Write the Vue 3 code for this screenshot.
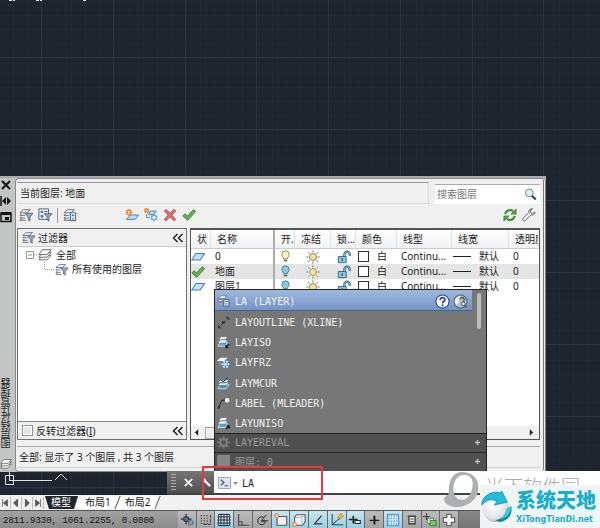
<script setup>
import { ref } from 'vue'

const command = ref('LA')
const search = ref('')
const inverted = ref(false)

const majors = [41, 113, 185, 256, 328, 400, 472, 543, 615, 687, 758, 830]
const majorRows = [57, 129, 200, 272, 344, 416, 487]
const minorOffsets = [-56, -42, -28, -14]
const steps = (list) => list.flatMap((v) => minorOffsets.map((o) => v + o))
const minors = steps(majors)
const minorRows = steps(majorRows)

const columns = ['状', '名称', '开.', '冻结', '锁...', '颜色', '线型', '线宽', '透明度']
const layers = [
  { name: '0', state: 'sheet', bulb: 'bulb-on' },
  { name: '地面', state: 'check', bulb: 'bulb-off', current: true },
  { name: '图层1', state: 'sheet', bulb: 'bulb-off' }
]

const suggestions = [
  { text: 'LA (LAYER)', icon: 'c-layer' },
  { text: 'LAYOUTLINE (XLINE)', icon: 'c-xline' },
  { text: 'LAYISO', icon: 'c-iso' },
  { text: 'LAYFRZ', icon: 'c-frz' },
  { text: 'LAYMCUR', icon: 'c-cur' },
  { text: 'LABEL (MLEADER)', icon: 'c-label' },
  { text: 'LAYUNISO', icon: 'c-iso' }
]

const toggles = [
  { id: 's-infer', label: '推断约束' },
  { id: 's-snap', label: '捕捉模式' },
  { id: 's-grid', label: '栅格显示', on: true },
  { id: 's-ortho', label: '正交模式' },
  { id: 's-polar', label: '极轴追踪' },
  { id: 's-osnap', label: '对象捕捉', on: true },
  { id: 's-osnap3', label: '三维对象捕捉', on: true },
  { id: 's-track', label: '对象捕捉追踪', on: true },
  { id: 's-ucs', label: '动态 UCS', on: true },
  { id: 's-dyn', label: '动态输入', on: true },
  { id: 's-lwt', label: '线宽' },
  { id: 's-tpy', label: '透明度', on: true },
  { id: 's-qp', label: '快捷特性' },
  { id: 's-cycle', label: '选择循环' },
  { id: 's-monitor', label: '注释监视器' }
]
</script>

<template>
  <div class="app">
    <svg class="defs" aria-hidden="true">
      <symbol id="stack" viewBox="0 0 16 16"><path d="M5 2h8l-4 3.500H1zM1 8.500 3 7m-2 1.500h6M1 11.500 3 10m-2 1.500h6M1 14l2-1.500M1 14h7" fill="none" stroke="#5d646c" stroke-width="1" /></symbol>
      <symbol id="filter" viewBox="0 0 16 16"><use href="#stack" /><path d="M7 6h9l-3.500 4.500V15l-2-1.500v-3z" fill="#9dabb9" stroke="#4a5663" stroke-width=".9" /></symbol>
      <symbol id="group" viewBox="0 0 16 16"><path d="M1 1h11v12H1z" fill="#eef4fa" stroke="#3e4b59" /><path d="M3 3h3v3H3zM3 8h3v3H3z" fill="#3c7fc0" /><path d="M7 4h4" stroke="#445" /><path d="M7 6.500h9l-3.500 4V15l-2-1.500v-3z" fill="#9dabb9" stroke="#4a5663" stroke-width=".9" /></symbol>
      <symbol id="states" viewBox="0 0 16 16"><use href="#stack" /><path d="M8.500 5.500h6v9h-6z" fill="#fff" stroke="#2f4a68" /><path d="M10 7.500h3v2h-3z" fill="#3c7fc0" /><path d="M10 11.500h3M10 13h3" stroke="#3c6a98" stroke-width=".8" /></symbol>
      <symbol id="new" viewBox="0 0 16 16"><path d="M6 8h9.500l-4 5H1.500z" fill="#b9dcf6" stroke="#2d7fc4" /><path d="M4.500 1v8M.5 5h8M1.700 2.200l5.600 5.600M7.300 2.200 1.700 7.800" stroke="#e8792b" stroke-width="1.500" /><circle cx="4.500" cy="5" r="1.500" fill="#ffd98b" /></symbol>
      <symbol id="newfrz" viewBox="0 0 16 16"><path d="M7 3.500h7l-3 4H5z" fill="#b9dcf6" stroke="#2d7fc4" /><path d="M1 1h4v4H1z" fill="#f6b36e" stroke="#df7625" /><path d="M3 7v4h4" fill="none" stroke="#2d7fc4" /><g stroke="#4f93cb" stroke-width="1.400"><path d="M11.500 7v8M8 9l7 4M15 9l-7 4" /><circle cx="11.500" cy="11" r="2.700" fill="#dceefa" stroke-width="1" /></g></symbol>
      <symbol id="cross" viewBox="0 0 16 16"><path d="M3.500 1.500 8 6l4.500-4.500 2 2L10 8l4.500 5-2 1.500L8 10l-4.500 4.500-2-1.500L6 8 1.500 3.500z" fill="#dc7274" stroke="#96363c" stroke-width=".9" /></symbol>
      <symbol id="check" viewBox="0 0 16 16"><path d="m1 9 2.500-2.500L6 9.500 13 2l2.500 2L6.500 14z" fill="#65b74d" stroke="#27752a" /></symbol>
      <symbol id="sheet" viewBox="0 0 16 16"><path d="M5.500 4h10l-5 7.500H.8z" fill="#c7e2f7" stroke="#3e7fb5" stroke-width="1.200" /></symbol>
      <symbol id="layers3" viewBox="0 0 16 16"><g fill="#fff" stroke="#535960"><path d="M5 8h10l-4.500 5.500H1z" /><path d="M5 5h10l-4.500 5.500H1z" /><path d="M5 2h10l-4.500 5.500H1z" /></g></symbol>
      <symbol id="refresh" viewBox="0 0 16 16"><path d="M2.500 7A5.700 5.700 0 0 1 11.500 3.500M13.500 9A5.700 5.700 0 0 1 4.500 12.500" fill="none" stroke="#418f3d" stroke-width="2.600" /><path d="M15 1v6H9zM1 15V9h6z" fill="#55a34e" stroke="#2d7731" stroke-width=".7" /></symbol>
      <symbol id="wrench" viewBox="0 0 16 16"><path d="M14.500 4.500 12 6.500 9.700 5l.1-2.500L12 1C9.500.4 7.300 2.500 7.800 5.200L1.200 12c-1 1.500 1 3.300 2.500 2.300l6.600-6.600c2.800.7 5.200-1 4.200-3.200z" fill="#f5f6f8" stroke="#535c68" stroke-width="1.100" /></symbol>
      <symbol id="lens" viewBox="0 0 16 16"><path d="m9.500 9.500 5 4.500" stroke="#46474a" stroke-width="2.800" /><circle cx="6.500" cy="6" r="4.700" fill="#d9effa" stroke="#727b83" stroke-width="1.200" /></symbol>
      <symbol id="bulb-on" viewBox="0 0 10 14"><path d="M3 9.500C3 8 1 7 1 4.700a4 4 0 0 1 8 0C9 7 7 8 7 9.500z" fill="#fff8be" stroke="#837c56" /><path d="M3 10.500h4v2H3z" fill="#777" /></symbol>
      <symbol id="bulb-off" viewBox="0 0 10 14"><path d="M3 9.500C3 8 1 7 1 4.700a4 4 0 0 1 8 0C9 7 7 8 7 9.500z" fill="#8ec5e0" stroke="#47758b" /><path d="M3 10.500h4v2H3z" fill="#666" /></symbol>
      <symbol id="sun" viewBox="0 0 16 16"><path d="M8 .5v15M.5 8h15M2.600 2.600l10.800 10.800M13.400 2.600 2.600 13.400" stroke="#68604a" stroke-width="1.100" /><circle cx="8" cy="8" r="5.500" fill="#fff" /><circle cx="8" cy="8" r="4" fill="#ffe59a" stroke="#85734b" /></symbol>
      <symbol id="lock" viewBox="0 0 16 16"><path d="M8.500 8V5a3 3 0 0 1 6 0v1.500" fill="none" stroke="#28546f" stroke-width="2.600" /><path d="M8.500 8V5a3 3 0 0 1 6 0v1" fill="none" stroke="#9fd4ed" stroke-width="1" /><path d="M1.500 7.500h9v7h-9z" fill="#8fcbe8" stroke="#245c7d" /><path d="M6 9.500v3" stroke="#174560" stroke-width="1.400" /></symbol>
      <symbol id="c-layer" viewBox="0 0 16 16"><path d="M5 1h7L9 4H1zM1 6h6v2H1zM1 10h6v2H2z" fill="#f5f5f5" stroke="#444" stroke-width=".6" /><path d="M8.500 5.500h6v9h-6z" fill="#fff" stroke="#2f4a68" /><path d="M10 7h3v2h-3z" fill="#3c7fc0" /><path d="M10 11h3M10 13h3" stroke="#3c6a98" /></symbol>
      <symbol id="c-xline" viewBox="0 0 16 16"><path d="m2 14 12-12" stroke="#272727" stroke-dasharray="3 1.500" /><path d="M11 1.500h3.500V5M1.500 11v3.500H5" fill="none" stroke="#272727" /><path d="M6.500 6.500h3v3h-3z" fill="#272727" /></symbol>
      <symbol id="c-iso" viewBox="0 0 16 16"><path d="M4 8h9l-3 4.500H1z" fill="#54a3df" stroke="#d9effc" /><path d="M4 5h9l-3 3.500H1zM5 1h8l-3 3.500H2z" fill="#fff" stroke="#5b6168" stroke-width=".6" /><path d="m15 10-4 4m0-3v3.500h3" fill="none" stroke="#151515" stroke-width="1.300" /></symbol>
      <symbol id="c-uniso" viewBox="0 0 16 16"><path d="M4 8h9l-3 5H1z" fill="#54a3df" stroke="#d9effc" /><path d="M4 5h9l-3 3.500H1zM5 1h8l-3 3.500H2z" fill="#fff" stroke="#5b6168" stroke-width=".6" /><path d="m11 15 4-4m-3.500 0H15v3.500" fill="none" stroke="#151515" stroke-width="1.300" /></symbol>
      <symbol id="c-frz" viewBox="0 0 16 16"><path d="M4 2h9l-4 4H0z" fill="#f8f8f8" /><path d="M3 7v3h3" fill="none" stroke="#75bce9" /><circle cx="10.500" cy="10" r="4.500" fill="#dff3ff" /><path d="M10.500 5v10M6 7.500l9 5M15 7.500l-9 5" stroke="#2686cb" stroke-width="1.400" /><circle cx="10.500" cy="10" r="1.500" fill="#fff" /></symbol>
      <symbol id="c-cur" viewBox="0 0 16 16"><path d="M4 9.500h11l-4 5H1z" fill="#3b91d2" stroke="#d7effd" /><path d="M4 6.500h11l-4 4H1zM4 3.500h11l-4 4H1z" fill="#fff" stroke="#4b5965" stroke-width=".8" /><path d="m5 3.500 2.500 2.500L13 1" fill="none" stroke="#283e52" stroke-width="1.300" /></symbol>
      <symbol id="c-label" viewBox="0 0 16 16"><path d="M1.500 14 6 4h5" fill="none" stroke="#232323" stroke-width="1.200" /><path d="m1 15 .5-4 2.500 1.500z" fill="#232323" /><circle cx="12.500" cy="4" r="2.700" fill="#fff" /></symbol>
      <symbol id="gear" viewBox="0 0 16 16"><path d="M8 .5v15M.5 8h15M2.700 2.700l10.600 10.600M13.300 2.700 2.700 13.300" stroke="#7d7d7d" stroke-width="2.400" /><circle cx="8" cy="8" r="4" fill="#505050" stroke="#7d7d7d" stroke-width="2.400" /></symbol>
      <symbol id="s-infer" viewBox="0 0 16 16"><path d="M7 1v12M1 7h12" stroke="#292d32" stroke-width="1.400" /><path d="M4.500 4.500h5v5h-5z" fill="#6b7178" stroke="#292d32" /><path d="M10 15V9h3a2 2 0 0 1 0 4h-2" fill="none" stroke="#2d78b8" stroke-width="1.500" /><circle cx="11" cy="14" r="1.500" fill="#e87737" /></symbol>
      <symbol id="s-snap" viewBox="0 0 16 16"><path d="M2 3h9M2 6h9M2 9h9M2 12h9" stroke="#3a3a3a" stroke-width="1.300" stroke-dasharray="1.300 2" /><path d="M13 2v11H5" fill="none" stroke="#333" stroke-dasharray="4 1" /></symbol>
      <symbol id="s-grid" viewBox="0 0 16 16"><path d="M1.500 1.500h13v13h-13zM4.500 1v14M8 1v14M11.500 1v14M1 4.500h14M1 8h14M1 11.500h14" fill="#fff" fill-opacity=".4" stroke="#1e2933" stroke-width="1.100" /></symbol>
      <symbol id="s-ortho" viewBox="0 0 16 16"><path d="M3 1v13h12M3 10h4v4" fill="none" stroke="#42464a" stroke-width="1.300" /></symbol>
      <symbol id="s-polar" viewBox="0 0 16 16"><path d="M10 5a4.500 4.500 0 1 0 2 5M7 9h8M7 9l6-7" fill="none" stroke="#252525" stroke-width="1.100" /><path d="m7 9 4-1.500v3z" fill="#333" /></symbol>
      <symbol id="s-osnap" viewBox="0 0 16 16"><path d="M3.500 4h11v10h-11z" fill="#eef2f5" stroke="#4d5962" stroke-width="1.300" /><circle cx="3" cy="3" r="2" fill="#fff" stroke="#f07828" stroke-width="1.400" /></symbol>
      <symbol id="s-osnap3" viewBox="0 0 16 16"><path d="M5 2h10v8l-3 4H3V5z" fill="#f0f4f7" stroke="#4d5962" stroke-width="1.200" /><path d="M3 5h8.500L15 2M11.500 5v8" fill="none" stroke="#8b99a4" stroke-width=".8" /><circle cx="3" cy="13" r="2" fill="#fff" stroke="#f07828" stroke-width="1.300" /></symbol>
      <symbol id="s-track" viewBox="0 0 16 16"><path d="M12 3 4 12.500h9" fill="none" stroke="#27343d" stroke-width="1.300" /></symbol>
      <symbol id="s-ucs" viewBox="0 0 16 16"><path d="M2.500 1v12.500H15M2.500 13.500 11 6" fill="none" stroke="#293946" stroke-width="1.100" /><path d="M11 1 8.500 6 12 5l-1 3 5-5-3 .5 1-3z" fill="#f4b642" stroke="#c67b18" stroke-width=".6" /></symbol>
      <symbol id="s-dyn" viewBox="0 0 16 16"><path d="M6 3v9M1 7.500h10" stroke="#1b252c" stroke-width="1.700" /><path d="M8 8.500h6v3.500H8z" fill="#fff" stroke="#1b252c" stroke-width="1.200" /></symbol>
      <symbol id="s-lwt" viewBox="0 0 16 16"><path d="M3 8.500h11" stroke="#202020" stroke-width="1.500" /><path d="M8.500 3v10" stroke="#202020" stroke-width="2.200" /></symbol>
      <symbol id="s-tpy" viewBox="0 0 16 16"><path d="M1.500 1.500h13v13h-13z" fill="#eaf6ff" stroke="#327fc0" /><path d="M3.500 2v12M6.500 2v12M9.500 2v12M12.500 2v12M2 3.500h12M2 6.500h12M2 9.500h12M2 12.500h12" stroke="#5ba1d7" stroke-width="1" stroke-dasharray="2 1" /></symbol>
      <symbol id="s-qp" viewBox="0 0 16 16"><path d="M4.500 3.500h7v9h-7z" fill="#e2e2e2" stroke="#282828" stroke-width="1.300" /><path d="M3 4h10M6 7h4M6 10h4" stroke="#494949" /></symbol>
      <symbol id="s-cycle" viewBox="0 0 16 16"><path d="M4 0v8M0 4h8" stroke="#3d434a" stroke-width="1.200" /><path d="M5 6h7v6H5z" fill="#e7f5df" stroke="#4c7550" /><path d="M8 8.500h7v6H8z" fill="#77c963" stroke="#24772b" /></symbol>
      <symbol id="s-monitor" viewBox="0 0 16 16"><path d="M5.500 1.500h5v4h4v5h-4v4h-5v-4h-4v-5h4z" fill="#fafafa" stroke="#4c5055" stroke-width="1.200" /></symbol>
    </svg>

    <main class="canvas">
      <svg class="grid" aria-hidden="true">
        <g class="minor">
          <line v-for="x in minors" :key="'a' + x" :x1="x + .5" :x2="x + .5" y1="0" y2="100%" />
          <line v-for="y in minorRows" :key="'b' + y" x1="0" x2="100%" :y1="y + .5" :y2="y + .5" />
        </g>
        <g class="major">
          <line v-for="x in majors" :key="'c' + x" :x1="x + .5" :x2="x + .5" y1="0" y2="100%" />
          <line v-for="y in majorRows" :key="'d' + y" x1="0" x2="100%" :y1="y + .5" :y2="y + .5" />
        </g>
        <path d="M9 .5h6M36 .5h6M83 .5h3" stroke="#dde3e6" stroke-dasharray="3 1" />
      </svg>
      <svg class="axis" viewBox="0 0 72 24" aria-hidden="true"><path d="M9.500 0v10M5.500 4.500h8v9h-8zM9.500 9.500H52M55 9l6-6 6 6" fill="none" stroke="#dfe3e6" /></svg>

      <section class="palette" aria-label="图层特性管理器">
        <aside class="strip">
          <button aria-label="关闭"><svg viewBox="0 0 12 12"><path d="m2 2 8 8M10 2l-8 8" stroke="#111" stroke-width="2" /></svg></button>
          <button aria-label="自动隐藏"><svg viewBox="0 0 12 12"><path d="M1 1v10" stroke="#111" stroke-width="1.500" /><path d="m6 2-4 4 4 4zM7 2l4 4-4 4z" fill="#111" /></svg></button>
          <button aria-label="特性"><svg viewBox="0 0 12 12"><path d="M1 2h10v8.500H1z" fill="none" stroke="#111" stroke-width="1.500" /><path d="M1 1h10v3H1zM5 6h4v3H5z" fill="#111" /></svg></button>
          <h1>图层特性管理器</h1>
          <svg class="strip-icon" aria-hidden="true"><use href="#layers3" /></svg>
        </aside>

        <div class="panel">
          <header class="top">
            <p class="current">当前图层: 地面</p>
            <label class="search"><input v-model="search" type="text" placeholder="搜索图层" aria-label="搜索图层"><svg class="i13" aria-hidden="true"><use href="#lens" /></svg></label>
          </header>
          <div class="tools">
            <div class="tool-group">
              <button aria-label="新建特性过滤器"><svg><use href="#filter" /></svg></button>
              <button aria-label="新建组过滤器"><svg><use href="#group" /></svg></button>
              <span class="rule"></span>
              <button aria-label="图层状态管理器"><svg><use href="#states" /></svg></button>
            </div>
            <div class="tool-group">
              <button aria-label="新建图层"><svg><use href="#new" /></svg></button>
              <button aria-label="新建冻结图层"><svg><use href="#newfrz" /></svg></button>
              <button aria-label="删除图层"><svg><use href="#cross" /></svg></button>
              <button aria-label="置为当前"><svg><use href="#check" /></svg></button>
            </div>
            <div class="tool-group end">
              <button aria-label="刷新"><svg><use href="#refresh" /></svg></button>
              <button aria-label="设置"><svg><use href="#wrench" /></svg></button>
            </div>
          </div>

          <div class="panes">
            <section class="filters">
              <header class="pane-bar"><svg class="i13"><use href="#filter" /></svg><h2>过滤器</h2><button class="fold" aria-label="折叠"><svg viewBox="0 0 12 10"><path d="M5.500 1 1.500 5l4 4M10.500 1l-4 4 4 4" /></svg></button></header>
              <ul class="tree">
                <li class="node"><svg class="twig" viewBox="0 0 12 14"><path d="M1.500 3.500h7v7h-7zM3 7h4" fill="#fff" stroke="#8996a5" /><path d="M9 7h3" stroke="#999" stroke-dasharray="1 1" /></svg><svg class="i14"><use href="#layers3" /></svg><span>全部</span></li>
                <li class="node child"><svg class="twig" viewBox="0 0 12 14"><path d="M2.500 0v7.500H12" fill="none" stroke="#999" stroke-dasharray="1 1" /></svg><svg class="i13"><use href="#filter" /></svg><span>所有使用的图层</span></li>
              </ul>
              <footer class="pane-bar foot"><label class="invert"><input v-model="inverted" type="checkbox">反转过滤器(<u>I</u>)</label><button class="fold" aria-label="收起"><svg viewBox="0 0 12 10"><path d="M5.500 1 1.500 5l4 4M10.500 1l-4 4 4 4" /></svg></button></footer>
            </section>

            <section class="list">
              <table>
                <colgroup><col v-for="(c, i) in columns" :key="c" :class="'w' + i"></colgroup>
                <thead><tr><th v-for="c in columns" :key="c">{{ c }}</th></tr></thead>
                <tbody>
                  <tr v-for="l in layers" :key="l.name" :class="{ current: l.current }">
                    <td class="mark"><svg class="i14"><use :href="'#' + l.state" /></svg></td>
                    <td>{{ l.name }}</td>
                    <td class="mid"><svg class="bulb"><use :href="'#' + l.bulb" /></svg></td>
                    <td class="mid"><svg class="i14"><use href="#sun" /></svg></td>
                    <td class="mid"><svg class="i14"><use href="#lock" /></svg></td>
                    <td class="color"><span class="pair"><i class="swatch"></i>白</span></td>
                    <td>Continu...</td>
                    <td class="weight"><span class="pair"><i class="dash"></i>默认</span></td>
                    <td>0</td>
                  </tr>
                </tbody>
              </table>
              <div class="scroll"><svg viewBox="0 0 6 8"><path d="M5 0v8L1 4z" /></svg><span class="thumb"></span><svg viewBox="0 0 6 8"><path d="M1 0v8l4-4z" /></svg></div>
            </section>
          </div>
          <p class="summary">全部: 显示了 3 个图层 , 共 3 个图层</p>
        </div>
      </section>

      <form class="command" @submit.prevent>
        <div class="grip">
          <span class="dots"></span>
          <button type="button" aria-label="关闭命令行"><svg viewBox="0 0 12 12"><path d="m2 2 8 8M10 2l-8 8" stroke="#f4f4f4" stroke-width="2" /></svg></button>
          <button type="button" aria-label="自定义"><svg viewBox="0 0 12 12"><path d="m3 3 7 7" stroke="#f4f4f4" stroke-width="2.500" /><path d="M1 4 4 1l1.500 2.500L3.500 6z" fill="#f4f4f4" /></svg></button>
        </div>
        <div class="entry">
          <button class="prompt" type="button" aria-label="最近使用的命令"><svg viewBox="0 0 14 13"><path d="M.5.5h13v12H.5z" fill="#dbe3ed" stroke="#97a3b2" /><path d="m3 3 3.500 3L3 9M7 9.500h4" fill="none" stroke="#46566a" stroke-width="1.300" /></svg><svg class="down" viewBox="0 0 6 4"><path d="M0 0h6L3 4z" fill="#888" /></svg></button>
          <input v-model="command" type="text" aria-label="命令">
        </div>

        <div class="popup">
          <ul class="options">
            <li v-for="(s, i) in suggestions" :key="s.text" :class="{ active: i === 0 }">
              <svg class="i13" aria-hidden="true"><use :href="'#' + (s.text === 'LAYUNISO' ? 'c-uniso' : s.icon)" /></svg><span>{{ s.text }}</span>
              <span v-if="i === 0" class="helpers">
                <button type="button" aria-label="帮助"><svg viewBox="0 0 16 16"><circle cx="8" cy="8" r="7" fill="#fff" stroke="#2b4c7d" stroke-width="1.200" /><path d="M5.500 6.500C5.300 3 10.700 3 10.500 6c0 1.800-2.400 1.800-2.400 4" fill="none" stroke="#20509c" stroke-width="1.900" /><circle cx="8.100" cy="12" r="1.200" fill="#20509c" /></svg></button>
                <button type="button" aria-label="在 Internet 上搜索"><svg viewBox="0 0 16 16"><circle cx="8" cy="8" r="7" fill="#b4c0c8" stroke="#596a78" stroke-width="1.200" /><path d="M2 6q4-5 7-3L6 6l1 2-3 4-2-3z" fill="#f0f4f2" /><path d="M7 5q4-3 5 1 0 2-2 3" fill="none" stroke="#525d66" stroke-width="1.500" /><circle cx="11" cy="10.500" r="2" fill="#d8e6ed" stroke="#525d66" /><path d="m12.500 12 2 2.500" stroke="#525d66" stroke-width="1.800" /></svg></button>
              </span>
            </li>
          </ul>
          <span class="bar"></span>
          <div class="extra"><svg class="i13" aria-hidden="true"><use href="#gear" /></svg><span>LAYEREVAL</span><button type="button" aria-label="展开 LAYEREVAL"><svg viewBox="0 0 7 7"><path d="M3.500 0v7M0 3.500h7" /></svg></button></div>
          <div class="extra"><i class="block"></i><span>图层: 0</span><button type="button" aria-label="展开图层"><svg viewBox="0 0 7 7"><path d="M3.500 0v7M0 3.500h7" /></svg></button></div>
        </div>
      </form>
    </main>

    <nav class="tabs">
      <button class="nav" aria-label="第一个"><svg viewBox="0 0 10 10"><path d="M2 0v10" /><path d="M8 1v8L3 5z" /></svg></button>
      <button class="nav" aria-label="上一个"><svg viewBox="0 0 10 10"><path d="M7 0v10L2 5z" /></svg></button>
      <button class="nav" aria-label="下一个"><svg viewBox="0 0 10 10"><path d="M3 0v10l5-5z" /></svg></button>
      <button class="nav" aria-label="最后一个"><svg viewBox="0 0 10 10"><path d="M8 0v10" /><path d="M2 1v8l5-4z" /></svg></button>
      <a class="tab on" href="#model">模型</a><a class="tab" href="#layout1">布局1</a><a class="tab" href="#layout2">布局2</a>
    </nav>

    <footer class="status">
      <output class="coords">2811.9330, 1061.2255, 0.0000</output>
      <div class="toggles"><button v-for="t in toggles" :key="t.id" :class="{ on: t.on }" :aria-pressed="!!t.on" :aria-label="t.label"><svg><use :href="'#' + t.id" /></svg></button></div>
    </footer>

    <div class="callout"></div>

    <div class="ghost">
      <svg viewBox="0 0 36 36" aria-hidden="true"><path fill-rule="evenodd" d="M18 0C8 0 4 10 5 22c-3 2-5 3-5 6 1 5 9 8 15 7 14-2 21-12 19-23C33 5 27 0 18 0zm2 3c8 0 10 6 8 14-2 9-8 13-14 10C6 21 9 3 20 3z" fill="#adafb1" /></svg>
      <span>当下软件园</span>
    </div>
    <div class="brand">
      <svg viewBox="0 0 36 36" aria-hidden="true">
        <defs><radialGradient id="ball" cx=".4" cy=".35" r=".7"><stop offset="0" stop-color="#fff" /><stop offset=".7" stop-color="#e2e5e7" /><stop offset="1" stop-color="#a8b0b5" /></radialGradient></defs>
        <circle cx="17" cy="20" r="14" fill="url(#ball)" />
        <path d="M2 13C5 4 14 1 21 3l2-2 6 12-14 3 3-4C12 9 7 10 2 16z" fill="#20bcd9" stroke="#117f9b" stroke-width=".7" />
        <path d="M33 17c2 8-3 16-12 17l-5-2c7-1 11-5 12-12z" fill="#14869e" />
        <path d="m33 17-5 3c-1 6-4 9-8 11 8-1 13-6 13-14z" fill="#39cce2" />
      </svg>
      <div class="brand-text"><strong>系统天地</strong><small>XiTongTianDi.net</small></div>
    </div>
  </div>
</template>

<style>
html, body { margin: 0; background: #1e252f; }
</style>

<style scoped>
.app { position: relative; display: flex; flex-direction: column; height: 100vh; min-height: 480px; overflow: hidden; font: 10px/14px "Noto Sans", "Noto Sans CJK SC", sans-serif; color: #222; }
.app * { box-sizing: border-box; }
.defs { position: absolute; width: 0; height: 0; }
button { display: grid; place-items: center; padding: 0; border: 0; background: none; color: inherit; font: inherit; }
input { font: inherit; color: inherit; margin: 0; padding: 0; border: 0; outline: 0; min-width: 0; background: none; }
h1, h2, p, ul { margin: 0; padding: 0; font: inherit; list-style: none; }
svg { display: block; flex: none; }
.i13 { width: 13px; height: 13px; }
.i14 { width: 14px; height: 14px; }

.canvas { position: relative; flex: 1; background: #1e252f; }
.grid { position: absolute; inset: 0; width: 100%; height: 100%; }
.minor line { stroke: #212933; }
.major line { stroke: #2d3441; }
.axis { position: absolute; left: 0; bottom: 0; width: 72px; height: 24px; }

.palette { position: absolute; left: 0; right: 54px; top: 176px; bottom: 23px; display: flex; border-top: 2px solid #a9acac; background: #c3c4c4; }
.strip { width: 15px; display: flex; flex-direction: column; align-items: center; gap: 4px; padding: 1px 3px 1px 0; }
.strip button, .strip button svg { width: 12px; height: 12px; }
.strip h1 { margin-top: auto; writing-mode: vertical-rl; transform: rotate(180deg); line-height: 12px; white-space: nowrap; }
.strip-icon { width: 12px; height: 14px; margin-top: 5px; }
.panel { flex: 1; min-width: 0; display: flex; flex-direction: column; padding: 3px 3px 3px 1px; background: #f0f0f0; border: 1px solid #888; border-right: 3px double #777; border-radius: 4px; }
.top { display: flex; gap: 6px; height: 22px; }
.current { flex: 1; padding: 3px; border: 1px solid #d9d9d9; border-top-color: #999; border-left: 0; }
.search { display: flex; align-items: center; width: 105px; margin-top: 2px; padding: 0 3px 1px 2px; background: #fff; border-top: 1px solid #aaa; }
.search input { flex: 1; height: 16px; }
.search input::placeholder { color: #777; opacity: 1; }
.tools { display: flex; align-items: center; height: 24px; padding: 0 4px 2px 2px; }
.tool-group { display: flex; align-items: center; gap: 5px; }
.tool-group + .tool-group { margin-left: 48px; }
.tool-group.end { margin-left: auto; }
.tools button, .tools svg { width: 14px; height: 14px; }
.tool-group .rule { width: 1px; height: 15px; background: #999; }
.panes { flex: 1; min-height: 0; display: flex; gap: 3px; }
.filters { display: flex; flex-direction: column; width: 170px; border: 1px solid #6d7074; background: #fff; }
.pane-bar { display: flex; align-items: center; gap: 3px; height: 18px; padding: 0 2px 0 4px; background: #f0f0f0; border-bottom: 1px solid #ccc; }
.foot { border: 0; border-top: 1px solid #888; }
.fold { margin-left: auto; }
.fold svg { width: 12px; height: 10px; fill: none; stroke: #222; stroke-width: 1.500; }
.tree { flex: 1; padding: 1px 7px; }
.node { display: flex; align-items: center; gap: 1px; height: 14px; }
.node span { margin-left: 3px; }
.child { padding-left: 17px; }
.twig { width: 12px; height: 14px; }
.invert { display: flex; align-items: center; }
.invert input { appearance: none; width: 11px; height: 11px; margin-right: 3px; border: 1px solid #8c9298; background: #e3e6e9; box-shadow: inset 0 0 0 1px #fff; }
.invert input:checked { background: #446; }
.list { flex: 1; min-width: 0; display: flex; flex-direction: column; overflow: hidden; background: #fff; border: 1px solid #555; border-top-width: 2px; }
table { width: 100%; table-layout: fixed; border-collapse: separate; border-spacing: 0; }
.w0 { width: 20px; } .w1 { width: 64px; } .w2 { width: 20px; } .w3 { width: 36px; } .w4 { width: 25px; } .w5 { width: 41px; } .w6 { width: 55px; } .w7 { width: 57px; }
th, td { height: 15px; padding: 0 0 0 4px; overflow: hidden; white-space: nowrap; text-align: left; font-weight: 400; line-height: 15px; }
th { height: 19px; padding-left: 6px; background: linear-gradient(#fff, #f0f1f3); border-right: 1px solid #dfe2e5; border-bottom: 1px solid #ccc; }
th:nth-child(2), td:nth-child(2) { border-right: 2px solid #aaa; }
tr.current td { background: #e5e5e5; }
td.mark { padding-left: 0; }
td.mid { padding: 0; }
td.mid svg { margin: 0 auto; }
td.color { padding-left: 2px; }
.bulb { width: 9px; height: 13px; }
.pair { display: flex; align-items: center; gap: 8px; }
.swatch { width: 11px; height: 11px; border: 1px solid #333; background: #fff; }
td.weight { padding-left: 1px; }
.dash { width: 18px; height: 1px; background: #222; }
.scroll { display: flex; align-items: center; gap: 6px; height: 13px; margin-top: auto; padding: 0 5px 0 3px; background: #f0f0f0; }
.scroll svg { width: 5px; height: 7px; fill: #222; }
.thumb { width: 240px; height: 12px; margin-right: auto; border: 1px solid #aaa; background: #eee; }
.summary { height: 22px; margin-top: 6px; padding: 3px 2px; border-top: 1px solid #aaa; border-bottom: 1px solid #d0d0d0; white-space: pre; }

.command { position: absolute; left: 167px; right: 0; bottom: 0; height: 24px; display: flex; border-bottom: 2px solid #3d4347; }
.grip { display: flex; align-items: center; gap: 7px; width: 47px; padding: 0 2px 0 4px; background: linear-gradient(#777, #505050); }
.grip button, .grip button svg { width: 11px; height: 11px; }
.dots { width: 5px; height: 17px; background: repeating-linear-gradient(#aaa 0 1px, transparent 1px 3px); }
.entry { flex: 1; display: flex; align-items: center; gap: 4px; padding: 2px 0 0 4px; background: #fff; font: 10px "DejaVu Sans Mono", monospace; }
.entry input { flex: 1; }
.prompt { display: flex; align-items: center; gap: 2px; }
.prompt svg { width: 13px; height: 12px; }
.prompt .down { width: 5px; height: 3px; }
.popup { position: absolute; left: 47px; bottom: 22px; width: 273px; height: 182px; display: flex; flex-direction: column; background: #777; border: 1px solid #222; border-width: 1px 1px 0; color: #f2f2f2; font: 10px "DejaVu Sans Mono", "Noto Sans CJK SC", monospace; }
.options { flex: 1; display: flex; flex-direction: column; margin-right: 14px; }
.options li { flex: 1; display: flex; align-items: center; gap: 5px; padding: 2px 4px 0 2px; }
.options .active { background: linear-gradient(#9eb9de, #7494c5); border-bottom: 1px solid #4c648c; }
.helpers { display: flex; gap: 3px; margin-left: auto; }
.helpers svg { width: 15px; height: 15px; }
.bar { position: absolute; right: 5px; top: 3px; width: 4px; height: 36px; border-radius: 2px; background: #bdbdbd; }
.extra { display: flex; align-items: center; gap: 5px; height: 19px; padding: 0 6px 1px 2px; background: #505050; border-top: 1px solid #252525; color: #999; }
.extra button { margin-left: auto; }
.extra button svg { width: 5px; height: 5px; stroke: #bbb; stroke-width: 2; }
.block { width: 13px; height: 13px; background: #858585; }

.tabs { display: flex; align-items: center; height: 15px; background: #f1f1f1; }
.nav { width: 11px; height: 12px; border-right: 1px solid #bbb; }
.nav svg { width: 8px; height: 8px; fill: #555; stroke: #555; }
.tab { position: relative; isolation: isolate; height: 13px; padding: 0 7px; line-height: 13px; color: #222; text-decoration: none; }
.tab::before { content: ""; position: absolute; z-index: -1; inset: 0 0 0 1px; border-right: 1px solid #555; background: #fff; transform: skewX(-22deg); }
.tab.on { color: #fff; }
.tab.on::before { background: #1e252f; transform: none; clip-path: polygon(0 0, 100% 0, 88% 100%, 12% 100%); }

.status { display: flex; align-items: stretch; height: 18px; background: linear-gradient(#858585, #777); border-top: 1px solid #555; }
.coords { width: 178px; padding: 3px 3px 0; font: 9px/14px "Liberation Mono", monospace; color: #111; background: linear-gradient(#a2a2a2, #8b8b8b); }
.toggles { display: grid; grid-template-columns: repeat(15, 1fr); width: 281px; }
.toggles button { border: 1px solid #686868; border-width: 0 1px 0 0; background: linear-gradient(#bbb, #a4a4a4); }
.toggles .on { background: linear-gradient(#c9e6f1, #9acde0); }
.toggles svg { width: 14px; height: 14px; }

.callout { position: absolute; left: 202px; bottom: 28px; width: 121px; height: 34px; border: 2px solid #e53a3b; pointer-events: none; }
.ghost { position: absolute; right: 20px; bottom: 20px; display: flex; gap: 5px; pointer-events: none; }
.ghost svg { width: 36px; height: 36px; }
.ghost span { font: 300 19px/28px "Noto Sans CJK SC", sans-serif; color: #a9a9a9; }
.brand { position: absolute; right: 0; bottom: 0; display: flex; align-items: center; gap: 2px; width: 120px; height: 43px; background: #eff4f6; pointer-events: none; }
.brand svg { width: 34px; height: 36px; }
.brand-text { display: flex; flex-direction: column; gap: 2px; color: #1badc9; }
.brand strong { font: 900 20px/24px "Noto Sans CJK SC", sans-serif; }
.brand small { font: 700 8px/12px "DejaVu Sans", sans-serif; }
</style>
